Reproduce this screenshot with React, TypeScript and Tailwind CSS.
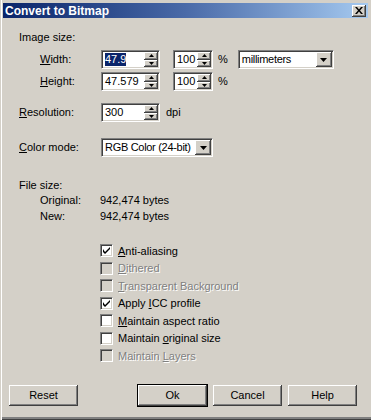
import React from "react";

const sunken =
  "border border-t-[#808080] border-l-[#808080] border-b-white border-r-white shadow-[inset_1px_1px_0_#404040,inset_-1px_-1px_0_#d4d0c8]";
const raised =
  "bg-[#d4d0c8] shadow-[inset_-1px_-1px_0_#404040,inset_1px_1px_0_#ffffff,inset_-2px_-2px_0_#808080]";

const Tri = ({ up }: { up?: boolean }) => (
  <svg width="5" height="3" viewBox="0 0 5 3" className="block">
    {up ? <path d="M2.5 0 L5 3 L0 3 Z" fill="#000" /> : <path d="M0 0 L5 0 L2.5 3 Z" fill="#000" />}
  </svg>
);

const Spinner = () => (
  <div className="flex flex-col w-[14px] h-full">
    <div className={`flex-1 flex items-center justify-center ${raised}`}>
      <Tri up />
    </div>
    <div className={`flex-1 flex items-center justify-center ${raised}`}>
      <Tri />
    </div>
  </div>
);

type SpinProps = { value: string; width: string; selected?: boolean };

const SpinBox = ({ value, width, selected }: SpinProps) => (
  <div className={`flex h-[19px] bg-white ${sunken} p-[1px] ${width}`}>
    <div className="flex-1 flex items-center pl-[2px] overflow-hidden whitespace-nowrap">
      {selected ? (
        <span className="bg-[#0a246a] text-white leading-[13px]">{value}</span>
      ) : (
        <span>{value}</span>
      )}
    </div>
    <Spinner />
  </div>
);

const Combo = ({ value, width }: { value: string; width: string }) => (
  <div className={`flex h-[19px] bg-white ${sunken} p-[1px] ${width}`}>
    <div className="flex-1 min-w-0 flex items-center pl-[2px] whitespace-nowrap overflow-hidden tracking-[-0.3px]">
      {value}
    </div>
    <div className={`w-[16px] shrink-0 flex items-center justify-center ${raised}`}>
      <svg width="7" height="4" viewBox="0 0 7 4">
        <path d="M0 0 L7 0 L3.5 4 Z" fill="#000" />
      </svg>
    </div>
  </div>
);

const U = ({ children }: { children: React.ReactNode }) => <span className="underline underline-offset-1">{children}</span>;

type CheckProps = { label: React.ReactNode; checked?: boolean; disabled?: boolean };

const Check = ({ label, checked, disabled }: CheckProps) => (
  <div className="flex items-center h-[17.5px] pl-[100px]">
    <div className={`w-[13px] h-[13px] flex items-center justify-center ${sunken} ${disabled ? "bg-[#d4d0c8]" : "bg-white"}`}>
      {checked && (
        <svg width="7" height="7" viewBox="0 0 7 7">
          <path d="M0 2 L0 5 L2 7 L7 2 L7 0 L2 5 Z" fill="#000" />
        </svg>
      )}
    </div>
    <span
      className={`ml-[5px] ${disabled ? "text-[#808080] [text-shadow:1px_1px_0_#ffffff]" : "text-black"}`}
    >
      {label}
    </span>
  </div>
);

const Btn = ({ label, def }: { label: string; def?: boolean }) => (
  <div
    className={`w-[69px] h-[21px] flex items-center justify-center ${raised} ${def ? "outline outline-1 outline-black" : ""}`}
  >
    {label}
  </div>
);

export default function App() {
  return (
    <div className="w-[371px] h-[420px] bg-[#d4d0c8] text-[11px] text-black font-['Liberation_Sans',Arial,sans-serif] shadow-[inset_1px_0_0_#d4d0c8,inset_2px_0_0_#ffffff,inset_0_-1px_0_#404040,inset_0_-3px_0_#808080] pt-[3px] flex flex-col">
      {/* Title bar */}
      <div className="mx-[3px] h-[15px] flex items-center justify-between bg-gradient-to-r from-[#0a246a] via-[#4a6aa8] to-[#a6caf0] pl-[2px] pr-[2px]">
        <span className="text-white font-bold text-[12px] leading-none">Convert to Bitmap</span>
        <div className={`w-[14px] h-[12px] flex items-center justify-center ${raised}`}>
          <svg width="8" height="7" viewBox="0 0 8 7">
            <path d="M0 0 L2 0 L4 2.5 L6 0 L8 0 L5 3.5 L8 7 L6 7 L4 4.5 L2 7 L0 7 L3 3.5 Z" fill="#000" />
          </svg>
        </div>
      </div>

      {/* Image size */}
      <div className="h-[14px] mt-[12px] flex items-center pl-[19px]">Image size:</div>

      <div className="h-[19px] mt-[6px] flex items-center">
        <span className="w-[101px] pl-[40px]">
          <U>W</U>idth:
        </span>
        <SpinBox value="47.9" width="w-[59px]" selected />
        <div className="ml-[13px]">
          <SpinBox value="100" width="w-[40px]" />
        </div>
        <span className="ml-[5px]">%</span>
        <div className="ml-[10px]">
          <Combo value="millimeters" width="w-[96px]" />
        </div>
      </div>

      <div className="h-[19px] mt-[3px] flex items-center">
        <span className="w-[101px] pl-[40px]">
          <U>H</U>eight:
        </span>
        <SpinBox value="47.579" width="w-[59px]" />
        <div className="ml-[13px]">
          <SpinBox value="100" width="w-[40px]" />
        </div>
        <span className="ml-[5px]">%</span>
      </div>

      {/* Resolution */}
      <div className="h-[19px] mt-[12px] flex items-center">
        <span className="w-[101px] pl-[19px]">
          <U>R</U>esolution:
        </span>
        <SpinBox value="300" width="w-[59px]" />
        <span className="ml-[6px]">dpi</span>
      </div>

      {/* Color mode */}
      <div className="h-[19px] mt-[16px] flex items-center">
        <span className="w-[101px] pl-[19px]">
          <U>C</U>olor mode:
        </span>
        <Combo value="RGB Color (24-bit)" width="w-[112px]" />
      </div>

      {/* File size */}
      <div className="h-[14px] mt-[21px] flex items-center pl-[19px]">File size:</div>
      <div className="h-[14px] mt-[1px] flex items-center">
        <span className="w-[100px] pl-[40px]">Original:</span>
        <span>942,474 bytes</span>
      </div>
      <div className="h-[14px] mt-[2px] flex items-center">
        <span className="w-[100px] pl-[40px]">New:</span>
        <span>942,474 bytes</span>
      </div>

      {/* Options */}
      <div className="mt-[19px] flex flex-col">
        <Check checked label={<><U>A</U>nti-aliasing</>} />
        <Check disabled label={<><U>D</U>ithered</>} />
        <Check disabled label={<><U>T</U>ransparent Background</>} />
        <Check checked label={<>Apply <U>I</U>CC profile</>} />
        <Check label={<><U>M</U>aintain aspect ratio</>} />
        <Check label={<>Maintain <U>o</U>riginal size</>} />
        <Check disabled label={<>Maintain <U>L</U>ayers</>} />
      </div>

      {/* Buttons */}
      <div className="mt-[20px] flex items-center pl-[9px]">
        <Btn label="Reset" />
        <div className="ml-[60px] flex gap-[6px]">
          <Btn label="Ok" def />
          <Btn label="Cancel" />
          <Btn label="Help" />
        </div>
      </div>
    </div>
  );
}
